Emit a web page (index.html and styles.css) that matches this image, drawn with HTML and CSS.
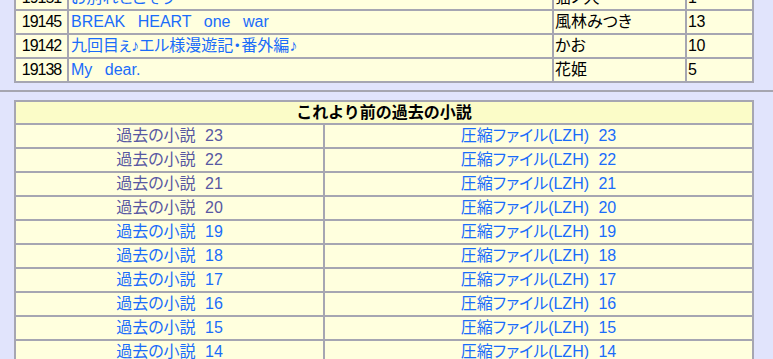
FILE: index.html
```html
<!DOCTYPE html>
<html lang="ja">
<head>
<meta charset="utf-8">
<title>小説一覧</title>
<link rel="stylesheet" href="styles.css">
</head>
<body>
<table class="list recent">
  <colgroup>
    <col class="w-no">
    <col class="w-title">
    <col class="w-author">
    <col class="w-cnt">
  </colgroup>
  <tr>
    <td class="no">19151</td>
    <td class="title"><a class="lnk" href="#">お別れどこそう・・・</a></td>
    <td>猫ノ犬</td>
    <td class="cnt">1</td>
  </tr>
  <tr>
    <td class="no">19145</td>
    <td class="title"><a class="lnk" href="#">BREAK HEART one war</a></td>
    <td>風林みつき</td>
    <td class="cnt">13</td>
  </tr>
  <tr>
    <td class="no">19142</td>
    <td class="title"><a class="lnk" href="#">九回目ぇ♪エル様漫遊記・番外編♪</a></td>
    <td>かお</td>
    <td class="cnt">10</td>
  </tr>
  <tr>
    <td class="no">19138</td>
    <td class="title"><a class="lnk" href="#">My dear.</a></td>
    <td>花姫</td>
    <td class="cnt">5</td>
  </tr>
</table>
<hr class="sep">
<table class="list past">
  <colgroup>
    <col class="w-left">
    <col class="w-right">
  </colgroup>
  <tr>
    <td class="head" colspan="2">これより前の過去の小説</td>
  </tr>
  <tr>
    <td class="mid"><a class="lnk visited" href="#">過去の小説 23</a></td>
    <td class="mid"><a class="lnk" href="#">圧縮ファイル(LZH) 23</a></td>
  </tr>
  <tr>
    <td class="mid"><a class="lnk visited" href="#">過去の小説 22</a></td>
    <td class="mid"><a class="lnk" href="#">圧縮ファイル(LZH) 22</a></td>
  </tr>
  <tr>
    <td class="mid"><a class="lnk visited" href="#">過去の小説 21</a></td>
    <td class="mid"><a class="lnk" href="#">圧縮ファイル(LZH) 21</a></td>
  </tr>
  <tr>
    <td class="mid"><a class="lnk visited" href="#">過去の小説 20</a></td>
    <td class="mid"><a class="lnk" href="#">圧縮ファイル(LZH) 20</a></td>
  </tr>
  <tr>
    <td class="mid"><a class="lnk" href="#">過去の小説 19</a></td>
    <td class="mid"><a class="lnk" href="#">圧縮ファイル(LZH) 19</a></td>
  </tr>
  <tr>
    <td class="mid"><a class="lnk" href="#">過去の小説 18</a></td>
    <td class="mid"><a class="lnk" href="#">圧縮ファイル(LZH) 18</a></td>
  </tr>
  <tr>
    <td class="mid"><a class="lnk" href="#">過去の小説 17</a></td>
    <td class="mid"><a class="lnk" href="#">圧縮ファイル(LZH) 17</a></td>
  </tr>
  <tr>
    <td class="mid"><a class="lnk" href="#">過去の小説 16</a></td>
    <td class="mid"><a class="lnk" href="#">圧縮ファイル(LZH) 16</a></td>
  </tr>
  <tr>
    <td class="mid"><a class="lnk" href="#">過去の小説 15</a></td>
    <td class="mid"><a class="lnk" href="#">圧縮ファイル(LZH) 15</a></td>
  </tr>
  <tr>
    <td class="mid"><a class="lnk" href="#">過去の小説 14</a></td>
    <td class="mid"><a class="lnk" href="#">圧縮ファイル(LZH) 14</a></td>
  </tr>
</table>
</body>
</html>
```
FILE: styles.css
```css
html, body {
  margin: 0;
  padding: 0;
}

body {
  background: #e1e4fc;
  color: #000;
  font-family: "Liberation Sans", "Noto Sans CJK JP", sans-serif;
  font-size: 16px;
  font-feature-settings: "palt";
  word-spacing: 5px;
}

.list {
  border-collapse: separate;
  border-spacing: 0;
  table-layout: fixed;
  width: 740px;
  margin-left: 14px;
  border: 1px solid #a6a6b2;
}

.list td {
  border: 1px solid #a6a6b2;
  background: #ffffde;
  padding: 0 1px;
  line-height: 22px;
  white-space: nowrap;
  overflow: hidden;
}

.recent {
  margin-top: -15px;
}

.w-no { width: 53px; }
.w-title { width: 485px; }
.w-author { width: 133px; }
.w-cnt { width: 67px; }

.w-left { width: 309px; }
.w-right { width: 429px; }

.list td.no {
  text-align: center;
  letter-spacing: -1px;
}

.list td.cnt {
  letter-spacing: -0.5px;
}

.list td.title {
  padding-left: 2px;
  word-spacing: 8px;
}

.list td.head {
  background: #fbfcc8;
  text-align: center;
  font-weight: bold;
  line-height: 21px;
  font-feature-settings: normal;
}

.list td.mid {
  text-align: center;
}

.lnk {
  color: #1a6cfa;
  text-decoration: none;
}

.lnk.visited {
  color: #5858a2;
}

.sep {
  border: 0;
  height: 2px;
  background: #a6a6b0;
  margin: 7px 0 8px;
}
```
